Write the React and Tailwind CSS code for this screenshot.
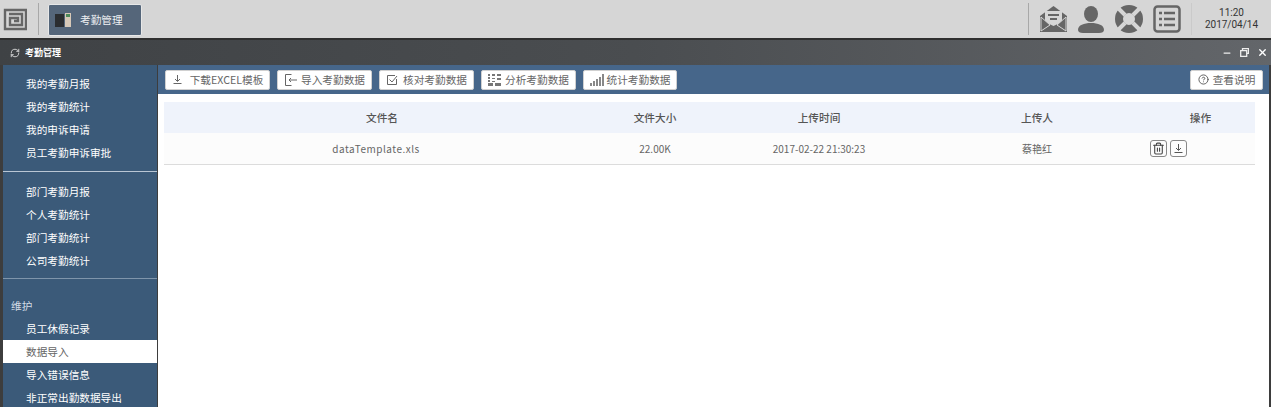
import React from "react";
import { RefreshCw, Minus, X, CircleHelp, Trash2 } from "lucide-react";

const font = { fontFamily: '"Noto Sans CJK SC", sans-serif' };

const LogoIcon = () => (
  <svg width="24" height="24" viewBox="0 0 24 24" fill="none" stroke="#666" strokeWidth="2.4">
    <path d="M2 3H23V22H2V3ZM6 7H19V18H7V11H15V14H11" />
  </svg>
);

const MailIcon = () => (
  <svg width="27" height="28" viewBox="0 0 27 28">
    <path d="M0 11 13.5 1 27 11v16H0z" fill="#666" />
    <path d="M5 6h17v11l-8.5 4L5 17z" fill="#d6d6d6" />
    <path d="M8 9h11v2H8zM10 13h7v2h-7z" fill="#666" />
    <path d="M1 12l9 8-9 6zM26 12l-9 8 9 6z" fill="#666" stroke="#d6d6d6" strokeWidth="1" />
  </svg>
);

const PersonIcon = () => (
  <svg width="26" height="27" viewBox="0 0 26 27" fill="#666">
    <ellipse cx="13" cy="8" rx="7" ry="8" />
    <path d="M0 24c0-5 6-7 13-7s13 2 13 7c0 2-2 3-5 3H5c-3 0-5-1-5-3z" />
  </svg>
);

const LifeRing = () => (
  <svg width="28" height="28" viewBox="0 0 28 28" fill="none">
    <circle cx="14" cy="14" r="10" stroke="#666" strokeWidth="8" />
    <path d="M3 3l7 7M25 3l-7 7M3 25l7-7M25 25l-7-7" stroke="#d6d6d6" strokeWidth="4" />
  </svg>
);

const ListBox = () => (
  <svg width="28" height="28" viewBox="0 0 28 28" fill="none" stroke="#666">
    <rect x="1.5" y="1.5" width="25" height="25" rx="3" strokeWidth="2.5" />
    <path d="M6 8h3M11 8h11M6 14h3M11 14h11M6 20h3M11 20h11" strokeWidth="2.4" />
  </svg>
);

const AppThumb = () => (
  <svg width="16" height="14" viewBox="0 0 16 14">
    <rect x="0" y="1" width="9" height="13" fill="#2b2d30" />
    <rect x="10" y="0" width="6" height="14" fill="#d8c9b8" />
    <rect x="11" y="1" width="4" height="3" fill="#4d8a5a" />
  </svg>
);

const DownArrow = ({ color = "#666" }) => (
  <svg width="11" height="11" viewBox="0 0 11 11" fill="none" stroke={color}>
    <path d="M5.5 1v6M3 5l2.5 2.5L8 5M1.5 9.5h8" />
  </svg>
);

const ImportIcon = () => (
  <svg width="14" height="14" viewBox="0 0 14 14" fill="none" stroke="#666">
    <path d="M7.5 1.5h-6v11h6M13 7H5M7 5 5 7l2 2" />
  </svg>
);

const CheckBoxIcon = () => (
  <svg width="12" height="12" viewBox="0 0 12 12" fill="none" stroke="#666">
    <path d="M10.5 5v5.5h-9v-9H9M3.5 5.5 6 8l5-6" />
  </svg>
);

const GridIcon = () => (
  <svg width="13" height="12" viewBox="0 0 13 12" fill="#777">
    <path d="M0 0h2v2H0zM0 3h2v2H0zM0 6h2v2H0zM0 9h5v3H0zM4 0h3v2H4zM9 0h4v2H9zM4 4h3v1H4zM9 4h4v2H9zM4 7h3v1H4zM7 9h6v3H7z" />
  </svg>
);

const ChartIcon = () => (
  <svg width="14" height="13" viewBox="0 0 14 13" fill="#888">
    <path d="M0 10h2v3H0zM3 8h2v5H3zM6 6h2v7H6zM9 4h2v9H9zM12 1h2v12h-2z" />
  </svg>
);

const toolbarButtons = [
  { label: "下载EXCEL模板", icon: <DownArrow />, width: "w-[105px]", gap: "gap-[7px]" },
  { label: "导入考勤数据", icon: <ImportIcon />, width: "w-[95px]", gap: "gap-[3px]" },
  { label: "核对考勤数据", icon: <CheckBoxIcon />, width: "w-[95px]", gap: "gap-[5px]" },
  { label: "分析考勤数据", icon: <GridIcon />, width: "w-[95px]", gap: "gap-[4px]" },
  { label: "统计考勤数据", icon: <ChartIcon />, width: "w-[94px]", gap: "gap-[3px]" },
];

const SideItem = ({ children, active }) => (
  <div
    className={`h-[23px] leading-[23px] pl-[23px] text-[10.67px] ${
      active ? "bg-white text-[#666]" : "text-white"
    }`}
  >
    {children}
  </div>
);

const Sidebar = () => (
  <aside className="w-[154px] h-full bg-[#3b5a79] overflow-hidden pt-[7px]">
    {["我的考勤月报", "我的考勤统计", "我的申诉申请", "员工考勤申诉审批"].map((t) => (
      <SideItem key={t}>{t}</SideItem>
    ))}
    <div className="h-px bg-[#b9c6d4] mt-[7px]" />
    <div className="pt-[8px]">
      {["部门考勤月报", "个人考勤统计", "部门考勤统计", "公司考勤统计"].map((t) => (
        <SideItem key={t}>{t}</SideItem>
      ))}
    </div>
    <div className="h-px bg-[#7f95ab] mt-[6px]" />
    <div className="pl-[8px] mt-[15px] h-[23px] leading-[23px] text-[10.67px] text-[#d5dde6]">维护</div>
    <SideItem>员工休假记录</SideItem>
    <SideItem active>数据导入</SideItem>
    <SideItem>导入错误信息</SideItem>
    <SideItem>非正常出勤数据导出</SideItem>
  </aside>
);

const Cols = ({ cells, className }) => (
  <div className={`flex items-center text-center ${className}`}>
    <div className="w-[436px]">{cells[0]}</div>
    <div className="w-[110px]">{cells[1]}</div>
    <div className="w-[218px]">{cells[2]}</div>
    <div className="w-[218px]">{cells[3]}</div>
    <div className="flex-1">{cells[4]}</div>
  </div>
);

export default function App() {
  return (
    <div className="w-[1271px] h-[407px] overflow-hidden flex flex-col bg-white" style={font}>
      {/* taskbar */}
      <header className="h-[38px] shrink-0 bg-[#d6d6d6] flex items-center">
        <div className="ml-[3px] w-[24px] flex"><LogoIcon /></div>
        <div className="ml-[11px] w-px h-[32px] bg-[#a8a8a8]" />
        <div className="ml-[9px] w-[94px] h-[32px] mt-[2px] rounded-[2px] border border-[#e8e8e8] bg-[#55667a] flex items-center pl-[6px] gap-[9px]">
          <AppThumb />
          <span className="text-[10.67px] text-[#eef0f2]">考勤管理</span>
        </div>
        <div className="ml-auto w-px h-[32px] bg-[#a8a8a8]" />
        <div className="ml-[11px] flex items-center">
          <MailIcon />
          <div className="ml-[11px] flex"><PersonIcon /></div>
          <div className="ml-[11px] flex"><LifeRing /></div>
          <div className="ml-[10px] flex"><ListBox /></div>
        </div>
        <div className="ml-[10px] w-px h-[32px] bg-[#cacaca]" />
        <div className="w-[79px] text-center font-['Roboto'] text-[10px] leading-[12px] text-[#333]">
          <div>11:20</div>
          <div>2017/04/14</div>
        </div>
      </header>
      <div className="h-[2px] shrink-0 bg-[#2f2f2f]" />

      {/* window */}
      <div className="flex-1 min-h-0 flex flex-col bg-[#3d3d3d]">
        <div className="h-[25px] shrink-0 bg-gradient-to-r from-[#3f4245] via-[#4a4d50] to-[#63666a] flex items-center pl-[10px] pr-[3px] text-white">
          <RefreshCw size={10} color="#e8e8e8" />
          <span className="ml-[5px] text-[9px] font-bold">考勤管理</span>
          <div className="ml-auto flex items-center gap-[8px]">
            <Minus size={10} color="#eee" strokeWidth={3} />
            <svg width="9" height="9" viewBox="0 0 9 9" fill="none" stroke="#eee" strokeWidth="1.3">
              <path d="M2.5 2V.7h6v4.6H7M.7 2.7h6v5.6h-6z" />
            </svg>
            <X size={11} color="#fff" strokeWidth={3} />
          </div>
        </div>
        <div className="flex-1 min-h-0 flex pl-[3px] pr-[2px]">
          <Sidebar />
          <main className="flex-1 ml-px bg-white flex flex-col min-w-0">
            <div className="h-[29px] shrink-0 bg-[#46668a] flex items-center pl-[7px] pr-[6px] gap-[7px]">
              {toolbarButtons.map((b) => (
                <button
                  key={b.label}
                  className={`${b.width} ${b.gap} h-[20px] rounded-[2px] bg-white border border-[#d0d0d0] flex items-center justify-center text-[10.67px] text-[#666]`}
                >
                  {b.icon}
                  <span>{b.label}</span>
                </button>
              ))}
              <button className="ml-auto w-[73px] h-[20px] rounded-[2px] bg-white border border-[#d0d0d0] flex items-center justify-center gap-[4px] text-[10.67px] text-[#666]">
                <CircleHelp size={11} color="#555" />
                <span>查看说明</span>
              </button>
            </div>
            <div className="pt-[8px] pl-[6px] w-[1097px]">
              <Cols
                className="h-[31px] bg-[#eff3fb] text-[10.67px] font-medium text-[#555]"
                cells={["文件名", "文件大小", "上传时间", "上传人", "操作"]}
              />
              <Cols
                className="h-[32px] bg-[#fcfcfc] border-b border-[#dcdcdc] text-[10px] text-[#666]"
                cells={[
                  <span key="name" className="tracking-[0.5px] pr-[12px]">dataTemplate.xls</span>,
                  "22.00K",
                  "2017-02-22 21:30:23",
                  "蔡艳红",
                  <div key="ops" className="flex pl-[4px] gap-[3px]">
                    <span className="w-[17px] h-[17px] rounded-[3px] border border-[#888] flex items-center justify-center">
                      <Trash2 size={13} color="#444" strokeWidth={2} />
                    </span>
                    <span className="w-[17px] h-[17px] rounded-[3px] border border-[#888] flex items-center justify-center">
                      <DownArrow color="#555" />
                    </span>
                  </div>,
                ]}
              />
            </div>
          </main>
        </div>
      </div>
    </div>
  );
}
